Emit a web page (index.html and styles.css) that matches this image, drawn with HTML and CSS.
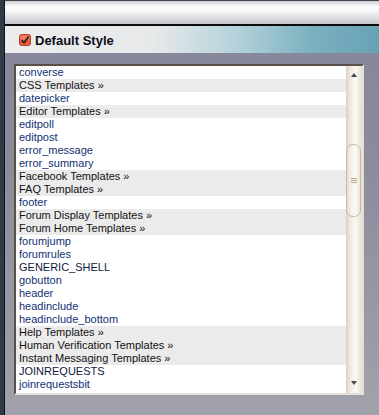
FILE: index.html
```html
<!DOCTYPE html>
<html lang="en">
<head>
    <meta charset="UTF-8">
    <title>Default Style</title>
    <link rel="stylesheet" href="styles.css">
</head>
<body>
<div class="page">
    <div class="topbar"></div>
    <div class="head">
        <svg class="check" width="12" height="12" viewBox="0 0 12 12">
            <rect x="0.5" y="0.5" width="11" height="11" rx="2" fill="#ec5a3e" stroke="#b8402c"/>
            <rect x="1.5" y="1.5" width="9" height="4" rx="1" fill="#f49a84" opacity="0.6"/>
            <path d="M2.6 6.2 L5 8.8 L9.6 2.6" fill="none" stroke="#1a1a1a" stroke-width="1.6"/>
        </svg>
        <span>Default Style</span>
    </div>
    <div class="content">
        <div class="box">
            <ul class="list">
                <li>converse</li>
                <li class="group">CSS Templates &raquo;</li>
                <li>datepicker</li>
                <li class="group">Editor Templates &raquo;</li>
                <li>editpoll</li>
                <li>editpost</li>
                <li>error_message</li>
                <li>error_summary</li>
                <li class="group">Facebook Templates &raquo;</li>
                <li class="group">FAQ Templates &raquo;</li>
                <li>footer</li>
                <li class="group">Forum Display Templates &raquo;</li>
                <li class="group">Forum Home Templates &raquo;</li>
                <li>forumjump</li>
                <li>forumrules</li>
                <li class="dark">GENERIC_SHELL</li>
                <li>gobutton</li>
                <li>header</li>
                <li>headinclude</li>
                <li>headinclude_bottom</li>
                <li class="group">Help Templates &raquo;</li>
                <li class="group">Human Verification Templates &raquo;</li>
                <li class="group">Instant Messaging Templates &raquo;</li>
                <li class="dark">JOINREQUESTS</li>
                <li>joinrequestsbit</li>
            </ul>
            <div class="scroll">
                <div class="arrow up"></div>
                <div class="track">
                    <div class="thumb"><i></i><i></i><i></i></div>
                </div>
                <div class="arrow down"></div>
            </div>
        </div>
    </div>
</div>
</body>
</html>
```

FILE: styles.css
```css
* {
    margin: 0;
    padding: 0;
}
html, body {
    height: 100%;
}
body {
    font-family: "Liberation Sans", Arial, sans-serif;
    background: #2e3b45;
}
.page {
    height: 100%;
    margin-left: 4px;
    border-left: 1px solid #101418;
    display: flex;
    flex-direction: column;
    background: linear-gradient(#85869a, #8b8b9c 40%, #a2a2ac 100%);
}
.topbar {
    height: 23px;
    border-top: 1px solid #3a4650;
    border-bottom: 2px solid #0c0c0c;
    background: linear-gradient(#cfcfd4, #fdfdfd 25%, #f6f6f8 45%, #c6c6ce 100%);
}
.head {
    height: 27px;
    display: flex;
    align-items: center;
    padding-left: 14px;
    background: linear-gradient(to right, #ededed 0%, #e6e8e9 40%, #b4d2da 62%, #7bb0c0 82%, #67a2b4 100%);
}
.head .check {
    margin: 1px 4px 0 0;
}
.head span {
    font-size: 13px;
    font-weight: bold;
    color: #0d0d1a;
    padding-top: 2px;
}
.content {
    flex: 1;
    padding: 11px 0 0 9px;
}
.box {
    width: 346px;
    display: flex;
    border-top: 2px solid #5a5048;
    border-left: 2px solid #5a5048;
    border-right: 2px solid #e4e0d6;
    border-bottom: 2px solid #e4e0d6;
    background: #fff;
}
.list {
    flex: 1;
    list-style: none;
    padding-bottom: 2px;
    font-size: 11px;
    line-height: 13px;
}
.list li {
    height: 13px;
    padding-left: 3px;
    color: #103173;
    white-space: nowrap;
}
.list .group {
    background: #ebebeb;
    color: #121212;
}
.list .dark {
    color: #13183a;
}
.scroll {
    width: 16px;
    display: flex;
    flex-direction: column;
    background: linear-gradient(to right, #d9d1c1, #efe9de 25%, #faf8f3 60%, #e6e0d4 100%);
}
.arrow {
    height: 18px;
    position: relative;
}
.arrow.up {
    border-radius: 7px 7px 0 0;
}
.arrow.down {
    border-radius: 0 0 7px 7px;
}
.arrow::after {
    content: "";
    position: absolute;
    left: 5px;
    border-left: 3px solid transparent;
    border-right: 3px solid transparent;
}
.arrow.up::after {
    top: 7px;
    border-bottom: 4px solid #4a4a4a;
}
.arrow.down::after {
    bottom: 8px;
    border-top: 4px solid #4a4a4a;
}
.track {
    flex: 1;
    padding-top: 60px;
}
.thumb {
    height: 71px;
    margin: 0 1px 0 0;
    border: 1px solid #c6b993;
    border-radius: 7px;
    background: linear-gradient(to right, #e6dfd0, #f8f5ee 40%, #fbf9f4 70%, #e9e3d7 100%);
    display: flex;
    flex-direction: column;
    align-items: center;
    justify-content: center;
    gap: 1px;
}
.thumb i {
    display: block;
    width: 6px;
    height: 1px;
    background: #b3aa90;
}
```
